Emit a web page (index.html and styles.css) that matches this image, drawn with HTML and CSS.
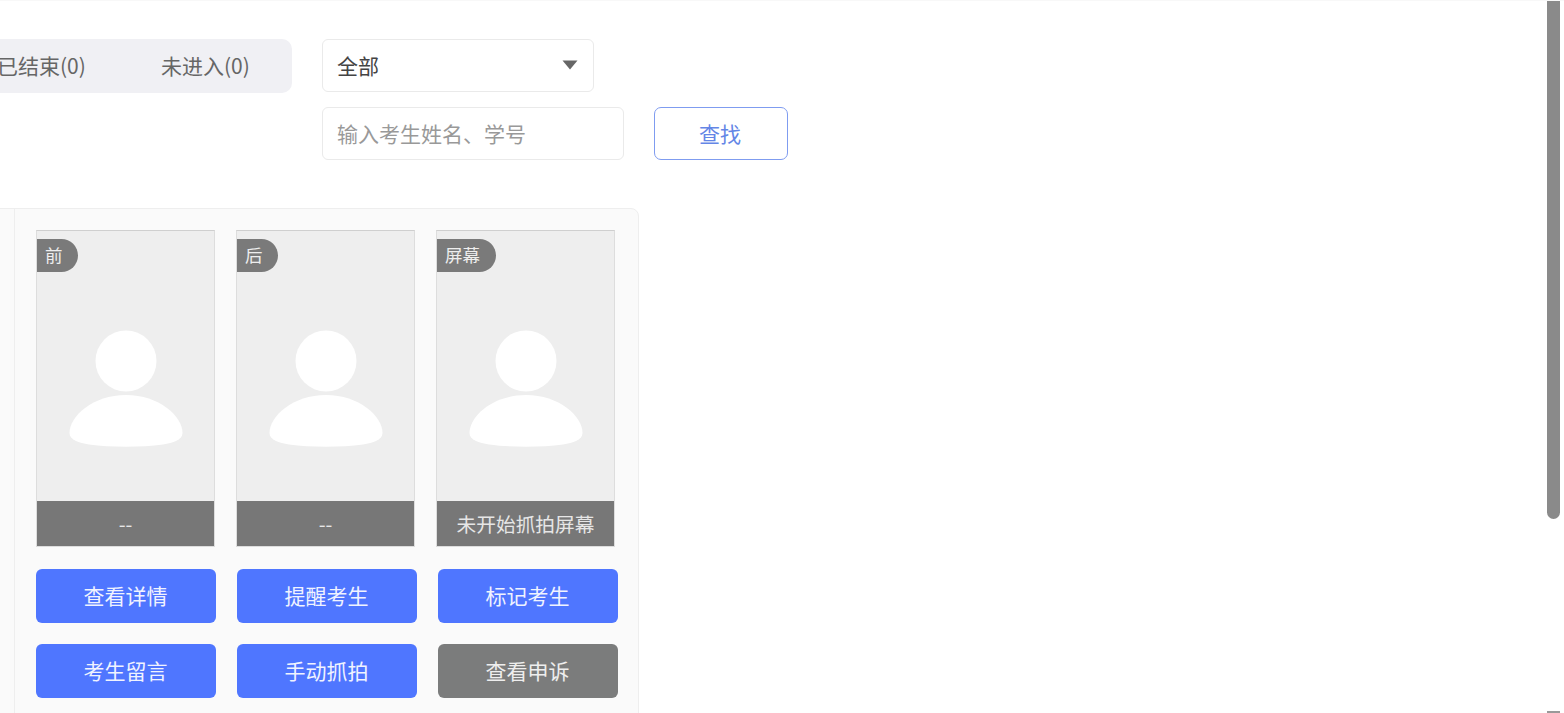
FILE: index.html
```html
<!DOCTYPE html>
<html lang="zh-CN">
<head>
<meta charset="utf-8">
<title>考生监控</title>
<link rel="stylesheet" href="styles.css">
</head>
<body>
<div class="page">
  <div class="toolbar">
    <div class="tabs">
      <span class="tab">已结束(0)</span>
      <span class="tab">未进入(0)</span>
    </div>
    <div class="filters">
      <div class="select">
        <span>全部</span>
        <svg class="caret" viewBox="0 0 16 10" aria-hidden="true"><path d="M0.5 0.5H15.5L8 9.500Z"/></svg>
      </div>
      <div class="search-row">
        <div class="input">输入考生姓名、学号</div>
        <div class="search-btn">查找</div>
      </div>
    </div>
  </div>
  <div class="card">
    <div class="card-side"></div>
    <div class="card-main">
      <div class="photos">
        <div class="photo">
          <span class="badge">前</span>
          <div class="photo-img"><svg class="avatar" viewBox="0 0 114 118"><circle cx="57" cy="31" r="30.5"/><path d="M57 65C24 65 0.500 86 0.500 103C0.500 110 10 113 20 114.500C42 117.500 72 117.500 94 114.500C104 113 113.500 110 113.500 103C113.500 86 90 65 57 65Z"/></svg></div>
          <div class="caption">--</div>
        </div>
        <div class="photo">
          <span class="badge">后</span>
          <div class="photo-img"><svg class="avatar" viewBox="0 0 114 118"><circle cx="57" cy="31" r="30.5"/><path d="M57 65C24 65 0.500 86 0.500 103C0.500 110 10 113 20 114.500C42 117.500 72 117.500 94 114.500C104 113 113.500 110 113.500 103C113.500 86 90 65 57 65Z"/></svg></div>
          <div class="caption">--</div>
        </div>
        <div class="photo">
          <span class="badge badge-wide">屏幕</span>
          <div class="photo-img"><svg class="avatar" viewBox="0 0 114 118"><circle cx="57" cy="31" r="30.5"/><path d="M57 65C24 65 0.500 86 0.500 103C0.500 110 10 113 20 114.500C42 117.500 72 117.500 94 114.500C104 113 113.500 110 113.500 103C113.500 86 90 65 57 65Z"/></svg></div>
          <div class="caption">未开始抓拍屏幕</div>
        </div>
      </div>
      <div class="actions">
        <div class="action">查看详情</div>
        <div class="action">提醒考生</div>
        <div class="action">标记考生</div>
        <div class="action">考生留言</div>
        <div class="action">手动抓拍</div>
        <div class="action action-gray">查看申诉</div>
      </div>
    </div>
  </div>
  <div class="scroll-thumb"></div>
  <div class="scroll-end"></div>
</div>
</body>
</html>
```
FILE: styles.css
```css
* { box-sizing: border-box; }
html, body { margin: 0; height: 100%; overflow: hidden; background: #fff; }
body { font-family: "Noto Sans CJK SC", "Liberation Sans", sans-serif; color: #555; }
.page { position: relative; width: 1564px; height: 713px; overflow: hidden; border-top: 1px solid #f8f8f8; padding-top: 38px; }
.toolbar { display: flex; align-items: flex-start; gap: 30px; margin-left: -20px; }
.tabs { width: 312px; height: 54px; background: #f0f0f4; border-radius: 10px; display: flex; align-items: flex-start; padding-left: 17px; }
.tab { width: 89px; font-size: 21px; color: #666; white-space: nowrap; margin-right: 75px; line-height: 52px; }
.tab:last-child { margin-right: 0; }
.filters { display: flex; flex-direction: column; gap: 15px; }
.select { width: 272px; height: 53px; border: 1px solid #eaeaea; border-radius: 6px; display: flex; align-items: center; justify-content: space-between; padding: 0 15px 2px 14px; font-size: 21px; color: #444; }
.caret { width: 16px; height: 10px; fill: #666; }
.search-row { display: flex; gap: 30px; }
.input { width: 302px; height: 53px; border: 1px solid #eaeaea; border-radius: 6px; padding: 0 14px; font-size: 21px; line-height: 50px; color: #999; }
.search-btn { width: 134px; height: 53px; border: 1px solid #7f9cf0; border-radius: 7px; padding-right: 2px; text-align: center; font-size: 21px; line-height: 50px; color: #6486e6; }
.card { display: flex; width: 660px; height: 540px; margin-top: 48px; margin-left: -21px; padding-left: 1px; background: #fafafa; border: 1px solid #eeeeee; border-radius: 8px; }
.card-side { width: 34px; flex: none; border-right: 1px solid #eeeeee; }
.card-main { padding: 21px 0 0 21px; }
.photos { display: flex; gap: 21px; }
.photo { position: relative; width: 179px; height: 317px; border: 1px solid #dddddd; border-top-color: #cfcfcf; background: #eeeeee; display: flex; flex-direction: column; }
.badge { position: absolute; left: 0; top: 8px; height: 33px; padding: 0 15px 0 8px; background: #7a7a7a; color: #eee; font-size: 17.5px; line-height: 31px; border-radius: 0 17px 17px 0; }
.badge-wide { padding-right: 16px; }
.photo-img { flex: 1; display: flex; justify-content: center; padding: 99px 0 0 0; }
.avatar { width: 114px; height: 118px; fill: #fff; }
.caption { height: 45px; background: #777777; color: #e6e6e6; font-size: 19.700px; line-height: 45px; text-align: center; white-space: nowrap; }
.actions { display: grid; grid-template-columns: repeat(3, 180px); gap: 21px 21px; margin-top: 22px; }
.action { height: 54px; background: #4f76ff; color: #f0f3ff; border-radius: 6px; padding-right: 1px; text-align: center; font-size: 21px; line-height: 52px; }
.action-gray { background: #7b7c7c; color: #eee; }
.scroll-thumb { position: absolute; left: 1547px; top: -1px; width: 13px; height: 519px; background: #8a8a8a; border-radius: 0 0 7px 7px; }
.scroll-end { position: absolute; left: 1547px; top: 710px; width: 13px; height: 3px; background: #999; }
```
